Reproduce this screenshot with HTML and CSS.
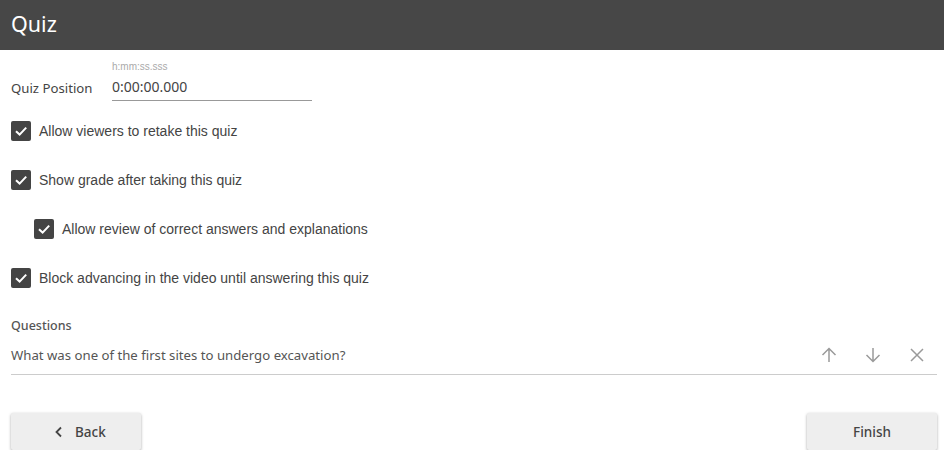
FILE: index.html
```html
<!DOCTYPE html>
<html>
<head>
<meta charset="utf-8">
<link rel="stylesheet" href="styles.css">
</head>
<body>
<header class="topbar"><h1 class="title">Quiz</h1></header>
<main class="content">
  <div class="position-row">
    <span class="field-label">Quiz Position</span>
    <div class="time-field">
      <span class="hint">h:mm:ss.sss</span>
      <span class="time-value">0:00:00.000</span>
    </div>
  </div>
  <div class="options">
    <label class="check-row"><span class="box"><svg viewBox="0 0 20 20" width="20" height="20"><path d="M5 10.2 L8.6 13.6 L15.2 6.6" fill="none" stroke="#fff" stroke-width="2"/></svg></span><span class="check-text">Allow viewers to retake this quiz</span></label>
    <label class="check-row"><span class="box"><svg viewBox="0 0 20 20" width="20" height="20"><path d="M5 10.2 L8.6 13.6 L15.2 6.6" fill="none" stroke="#fff" stroke-width="2"/></svg></span><span class="check-text">Show grade after taking this quiz</span></label>
    <label class="check-row nested"><span class="box"><svg viewBox="0 0 20 20" width="20" height="20"><path d="M5 10.2 L8.6 13.6 L15.2 6.6" fill="none" stroke="#fff" stroke-width="2"/></svg></span><span class="check-text">Allow review of correct answers and explanations</span></label>
    <label class="check-row"><span class="box"><svg viewBox="0 0 20 20" width="20" height="20"><path d="M5 10.2 L8.6 13.6 L15.2 6.6" fill="none" stroke="#fff" stroke-width="2"/></svg></span><span class="check-text">Block advancing in the video until answering this quiz</span></label>
  </div>
  <section class="questions">
    <div class="section-label">Questions</div>
    <div class="question-row">
      <span class="question-text">What was one of the first sites to undergo excavation?</span>
      <div class="actions">
        <svg class="icon" viewBox="0 0 20 20" width="20" height="20"><path d="M10 17 V3.5 M3.5 10 L10 3.5 L16.5 10" fill="none" stroke="#9a9a9a" stroke-width="1.5"/></svg>
        <svg class="icon" viewBox="0 0 20 20" width="20" height="20"><path d="M10 3 V16.5 M3.5 10 L10 16.5 L16.5 10" fill="none" stroke="#9a9a9a" stroke-width="1.5"/></svg>
        <svg class="icon" viewBox="0 0 20 20" width="20" height="20"><path d="M4 4 L16 16 M16 4 L4 16" fill="none" stroke="#9a9a9a" stroke-width="1.5"/></svg>
      </div>
    </div>
  </section>
  <footer class="footer">
    <button class="btn btn-back"><svg viewBox="0 0 12 12" width="12" height="12"><path d="M8 1.5 L3.5 6 L8 10.5" fill="none" stroke="#444" stroke-width="1.8"/></svg><span>Back</span></button>
    <button class="btn">Finish</button>
  </footer>
</main>
</body>
</html>
```
FILE: styles.css
```css
* { box-sizing: border-box; }
body {
  margin: 0;
  background: #fff;
  font-family: "Noto Sans", "Open Sans", sans-serif;
  color: #444;
}
.topbar {
  height: 50px;
  background: #474747;
  display: flex;
  align-items: center;
  padding-left: 11px;
}
.title {
  margin: 0;
  font-weight: 400;
  font-size: 21.5px;
  color: #fff;
  line-height: 1;
  padding-bottom: 2px;
}
.content {
  padding: 0 8px 0 11px;
}
.position-row {
  display: flex;
  align-items: flex-end;
  height: 51px;
  padding-top: 11px;
}
.field-label {
  font-size: 13.2px;
  width: 101px;
  color: #444;
  padding-bottom: 4px;
}
.time-field {
  width: 200px;
  display: flex;
  flex-direction: column;
  border-bottom: 1px solid #999;
}
.hint {
  font-family: "Liberation Sans", Arial, sans-serif;
  font-size: 10px;
  color: #aaa;
  line-height: 12px;
  margin-bottom: 4px;
}
.time-value {
  font-size: 14px;
  color: #444;
  line-height: 20px;
  padding-bottom: 3px;
}
.options {
  display: flex;
  flex-direction: column;
  padding-top: 20px;
}
.check-row {
  display: flex;
  align-items: center;
  height: 20px;
  margin-bottom: 29px;
}
.check-row.nested {
  padding-left: 23px;
  margin-bottom: 29px;
}
.box {
  width: 20px;
  height: 20px;
  background: #444;
  border-radius: 2px;
  display: flex;
  margin-right: 8px;
}
.check-text {
  font-family: "Liberation Sans", Arial, sans-serif;
  font-size: 14px;
  color: #444;
}
.questions {
  margin-top: 0;
}
.section-label {
  font-size: 12.5px;
  font-weight: 500;
  color: #555;
  line-height: 18px;
}
.question-row {
  display: flex;
  align-items: center;
  justify-content: space-between;
  height: 40px;
  padding-top: 1px;
  border-bottom: 1px solid #ccc;
  margin-right: -1px;
}
.question-text {
  font-size: 13.2px;
  color: #555;
}
.actions {
  display: flex;
  gap: 24px;
  padding-right: 10px;
}
.icon { display: block; }
.footer {
  display: flex;
  justify-content: space-between;
  margin-top: 38px;
  margin-right: -1px;
}
.btn {
  width: 130px;
  height: 37px;
  border: none;
  border-radius: 2px;
  background: #eee;
  box-shadow: 0 1px 3px rgba(0,0,0,0.35);
  font-family: "Noto Sans", "Open Sans", sans-serif;
  font-size: 13.5px;
  font-weight: 500;
  color: #444;
  display: flex;
  align-items: center;
  justify-content: center;
  padding: 0;
}
.btn-back {
  justify-content: flex-start;
  padding-left: 42px;
  gap: 10px;
}
.btn svg { display: block; }
```
